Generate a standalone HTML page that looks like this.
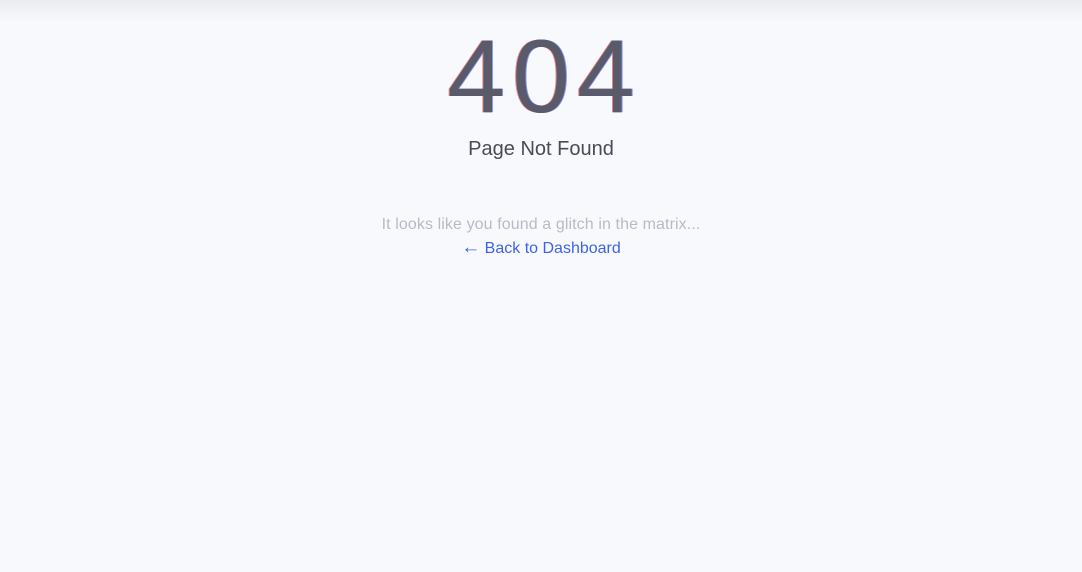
<!DOCTYPE html>
<html><head><style>
html,body{margin:0;padding:0;}
body{width:1082px;height:572px;background:#f8f9fd;font-family:"Liberation Sans",sans-serif;position:relative;overflow:hidden;}
.top{position:absolute;left:0;top:0;width:1082px;height:22px;background:linear-gradient(#ebecf0,#f8f9fd);}
.n{position:absolute;left:0;width:1082px;text-align:center;}
.big{top:17px;font-size:104px;line-height:120px;color:#5a5b6a;text-shadow:-1px 0 0 rgba(230,50,50,.6),1px 0 0 rgba(60,90,240,.6);letter-spacing:7px;text-indent:7px;}
.sub{top:137px;font-size:20px;color:#4a4b58;line-height:24px;}
.msg{top:215px;font-size:16px;color:#b9bac6;line-height:20px;letter-spacing:0.1px;}
.lnk{top:238px;font-size:16px;color:#3d63e8;line-height:20px;}
.lnk span{font-size:19px;}
</style></head><body>
<div class="top"></div>
<div class="n big">404</div>
<div class="n sub">Page Not Found</div>
<div class="n msg">It looks like you found a glitch in the matrix...</div>
<div class="n lnk"><span>←</span> Back to Dashboard</div>
</body></html>
